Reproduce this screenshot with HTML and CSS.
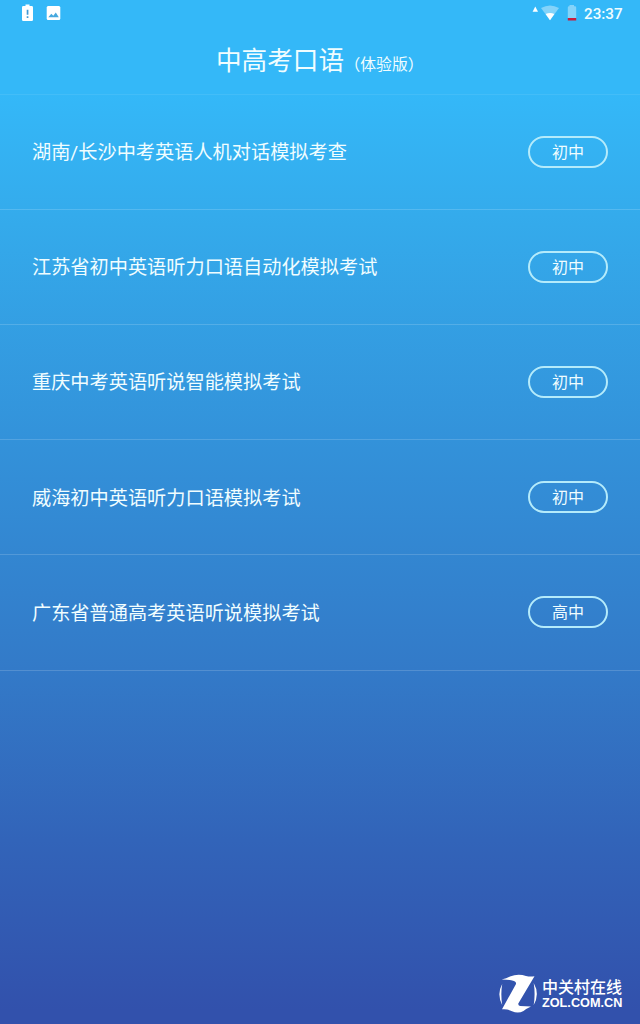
FILE: index.html
```html
<!DOCTYPE html>
<html lang="zh-CN">
<head>
<meta charset="utf-8">
<title>中高考口语</title>
<link rel="stylesheet" href="styles.css">
</head>
<body>
<div class="screen">
  <div class="statusbar">
    <svg class="notices" width="64" height="27" viewBox="0 0 64 27">
      <path fill="#fff" d="M25.500 4.500h4v1.600h2.200q1.300 0 1.300 1.300v12.300q0 1.300-1.300 1.300h-8.400q-1.300 0-1.300-1.300V7.400q0-1.300 1.300-1.300h2.200z"/>
      <path fill="#4199d5" d="M26.700 9.800h1.700v5h-1.700zM26.700 16.200h1.700v1.700h-1.700z"/>
      <rect x="46.700" y="6" width="13.600" height="14" rx="1.500" fill="#fff"/>
      <path fill="#47a9de" d="M48.300 17.200l3-3.500 2 2 2.500-3.200 3 4.700z"/>
    </svg>
    <div class="system">
      <svg width="48" height="27" viewBox="0 0 48 27">
        <path fill="#fff" d="M3.300 6.400L6 11.700H.6z"/>
        <path fill="#83d3fa" d="M9 8q9-5.200 18 0l-9 12.200z"/>
        <path fill="#fff" d="M13.600 14.100q4.400-2.400 8.800 0L18 20.200z"/>
        <path fill="#83d3fa" d="M37.500 5h4.500v1.300h1q1.200 0 1.200 1.200v10.500h-8.400V7.500q0-1.200 1.200-1.200h.5z"/>
        <path fill="#c91d3d" d="M35.800 18h8.400v2.500h-8.400z"/>
      </svg>
      <span class="clock">23:37</span>
    </div>
  </div>
  <header class="header">
    <h1 class="title">中高考口语</h1><span class="edition">（体验版）</span>
  </header>
  <ul class="exams">
    <li class="exam"><span class="name">湖南/长沙中考英语人机对话模拟考查</span><span class="level">初中</span></li>
    <li class="exam"><span class="name">江苏省初中英语听力口语自动化模拟考试</span><span class="level">初中</span></li>
    <li class="exam"><span class="name">重庆中考英语听说智能模拟考试</span><span class="level">初中</span></li>
    <li class="exam"><span class="name">威海初中英语听力口语模拟考试</span><span class="level">初中</span></li>
    <li class="exam"><span class="name">广东省普通高考英语听说模拟考试</span><span class="level">高中</span></li>
  </ul>
  <footer class="brand">
    <svg width="40" height="40" viewBox="0 0 40 40">
      <path fill="#fff" d="M2.500 5.500Q7.500 4.500 11 2.500Q19-.6 27 2Q31 3 35.500 2.300L19.300 29.500Q19 31.500 21 32L32 32.500Q27.500 34.500 24.500 37Q19 40 13 37.200Q9 34.800 3 35.300L17 10Q17.500 7.800 15 7Q10 5.400 2.500 5.500z"/>
      <path fill="#fff" d="M3.200 10Q-2.500 20 3.200 31Q1.500 20 3.200 10zM34.700 9Q41 20 34.700 31Q36.500 20 34.700 9z"/>
    </svg>
    <div class="brand-text">
      <div class="brand-name">中关村在线</div>
      <div class="brand-url">ZOL.COM.CN</div>
    </div>
  </footer>
</div>
</body>
</html>
```
FILE: styles.css
```css
* {
  box-sizing: border-box;
}

body {
  margin: 0;
}

.screen {
  display: flex;
  flex-direction: column;
  width: 640px;
  height: 1024px;
  overflow: hidden;
  color: #f0fdff;
  font-family: Roboto, "Noto Sans CJK SC", sans-serif;
  background: linear-gradient(#34b8f8 0, #34b8f8 94px, #34aaeb 225px, #3392da 440px, #337ac8 670px, #3264b9 840px, #3251ac 1010px);
}

.statusbar {
  display: flex;
  justify-content: space-between;
  height: 27px;
}

.system {
  display: flex;
  align-items: center;
  padding-right: 17px;
}

.clock {
  width: 39px;
  margin-left: 4px;
  font-size: 15.200px;
  font-weight: 500;
  line-height: 28px;
  white-space: nowrap;
}

.header {
  display: flex;
  align-items: baseline;
  height: 67.600px;
  padding: 14.500px 0 0 216px;
  border-bottom: 1px solid rgba(255, 255, 255, .08);
}

.title {
  margin: 0;
  font-size: 25.600px;
  font-weight: 400;
  line-height: 38px;
}

.edition {
  margin-left: .5px;
  font-size: 15.800px;
}

.exams {
  margin: 0;
  padding: 0;
  list-style: none;
}

.exam {
  display: flex;
  align-items: center;
  justify-content: space-between;
  height: 115.200px;
  padding: 0 32px;
  border-bottom: 1px solid rgba(255, 255, 255, .16);
  font-size: 19.200px;
}

.name {
  padding-bottom: 1.500px;
}

.level {
  display: flex;
  align-items: center;
  justify-content: center;
  width: 80px;
  height: 32px;
  padding-bottom: 2px;
  border: 2px solid #b4ebfb;
  border-radius: 16px;
  font-size: 16px;
}

.brand {
  display: flex;
  gap: 3px;
  margin-top: auto;
  padding: 0 0 10px 499px;
  color: #fff;
}

.brand-text {
  padding-top: 5px;
  white-space: nowrap;
}

.brand-name {
  font-size: 16px;
  font-weight: 500;
  line-height: 18px;
}

.brand-url {
  font-family: "Liberation Sans", Arial, sans-serif;
  font-size: 12.700px;
  font-weight: 700;
  line-height: 13px;
}
```
